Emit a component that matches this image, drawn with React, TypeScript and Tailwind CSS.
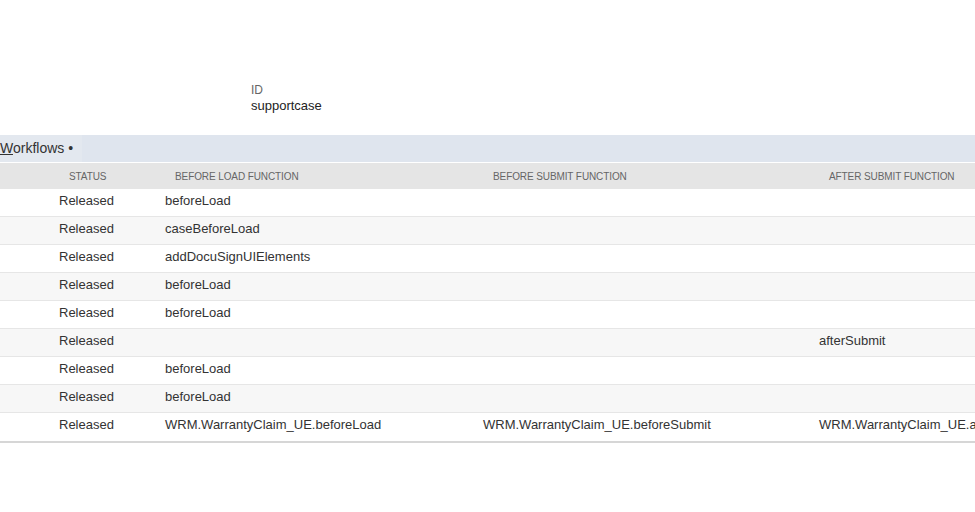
import React from 'react';

const rows = [
  { status: 'Released', beforeLoad: 'beforeLoad', beforeSubmit: '', afterSubmit: '' },
  { status: 'Released', beforeLoad: 'caseBeforeLoad', beforeSubmit: '', afterSubmit: '' },
  { status: 'Released', beforeLoad: 'addDocuSignUIElements', beforeSubmit: '', afterSubmit: '' },
  { status: 'Released', beforeLoad: 'beforeLoad', beforeSubmit: '', afterSubmit: '' },
  { status: 'Released', beforeLoad: 'beforeLoad', beforeSubmit: '', afterSubmit: '' },
  { status: 'Released', beforeLoad: '', beforeSubmit: '', afterSubmit: 'afterSubmit' },
  { status: 'Released', beforeLoad: 'beforeLoad', beforeSubmit: '', afterSubmit: '' },
  { status: 'Released', beforeLoad: 'beforeLoad', beforeSubmit: '', afterSubmit: '' },
  {
    status: 'Released',
    beforeLoad: 'WRM.WarrantyClaim_UE.beforeLoad',
    beforeSubmit: 'WRM.WarrantyClaim_UE.beforeSubmit',
    afterSubmit: 'WRM.WarrantyClaim_UE.afterSubmit',
  },
];

const cols = 'grid grid-cols-[54px_106px_318px_336px_1fr]';

export default function App() {
  return (
    <div className="w-[975px] h-[512px] overflow-hidden bg-white font-['Liberation_Sans',Arial,sans-serif]">
      {/* record id */}
      <div className="pt-[83px] pl-[251px] h-[135px]">
        <div className="text-[12px] leading-[14px] text-[#666]">ID</div>
        <div className="text-[13px] leading-[16px] text-[#222] mt-[1px]">supportcase</div>
      </div>

      {/* subtab bar */}
      <div className="h-[28px] bg-[#dfe5ee] border-b border-white flex">
        <div className="bg-[#e3e8ef] pr-[9px] flex items-center text-[14px] text-[#333]">
          <span>
            <span className="underline">W</span>orkflows
          </span>
          <span className="ml-[4px] text-[14px]">•</span>
        </div>
      </div>

      {/* table */}
      <div className="whitespace-nowrap overflow-hidden border-b-2 border-[#d6d6d6]">
        <div className={`${cols} h-[26px] items-center bg-[#e5e5e5] text-[10px] text-[#666] uppercase tracking-[-0.1px]`}>
          <div />
          <div className="pl-[15px]">Status</div>
          <div className="pl-[15px]">Before Load Function</div>
          <div className="pl-[15px]">Before Submit Function</div>
          <div className="pl-[15px]">After Submit Function</div>
        </div>
        {rows.map((r, i) => (
          <div
            key={i}
            className={`${cols} h-[28px] pt-[4px] text-[13px] leading-[16px] text-[#333] ${
              i % 2 === 1 ? 'bg-[#f7f7f7]' : 'bg-white'
            } ${i < rows.length - 1 ? 'border-b border-[#e6e6e6]' : ''}`}
          >
            <div />
            <div className="pl-[5px]">{r.status}</div>
            <div className="pl-[5px]">{r.beforeLoad}</div>
            <div className="pl-[5px]">{r.beforeSubmit}</div>
            <div className="pl-[5px]">{r.afterSubmit}</div>
          </div>
        ))}
      </div>
    </div>
  );
}
